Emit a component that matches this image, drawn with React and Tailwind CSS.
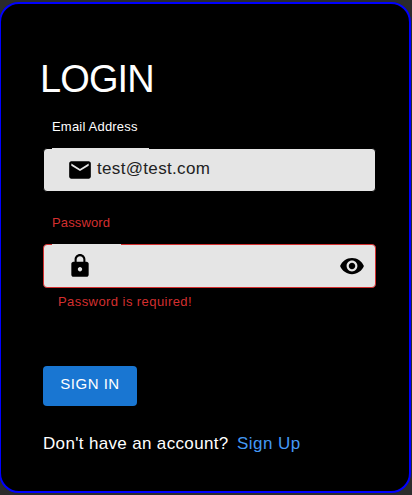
import { MdEmail, MdLock, MdVisibility } from "react-icons/md";

function Notch({ className }) {
  return <span className={`absolute -top-px left-2 h-px bg-[#e5e5e5] ${className}`} />;
}

export default function App() {
  return (
    <div className="h-[495px] w-[412px] overflow-hidden bg-[#2b2b2b] pt-[2px] font-['Liberation_Sans',Arial,sans-serif]">
      <main className="-ml-px flex h-[491px] w-[412px] flex-col rounded-[20px] border-2 border-[#0000ff] bg-black pr-[33px] pl-[42px] text-white">
        <h1 className="-ml-[3px] mt-[52px] h-[46px] text-[38px] leading-[46px] tracking-[-0.9px]">LOGIN</h1>
        <label className="mt-[15px] ml-[9px] h-5 text-[13px] leading-5 tracking-[0.2px]">Email Address</label>
        <div className="relative mt-[11px] flex h-[44px] w-[333px] items-center rounded-[4px] border border-black bg-[#e5e5e5] pl-[23px] text-black">
          <Notch className="w-[97px]" />
          <MdEmail size={26} />
          <span className="ml-[4px] pb-[2px] text-[17px] leading-6 tracking-[0.33px] text-[#222]">test@test.com</span>
        </div>
        <label className="mt-[21px] ml-[9px] h-5 text-[13px] leading-5 tracking-[0.12px] text-[#d32f2f]">Password</label>
        <div className="relative mt-[11px] flex h-[44px] w-[333px] items-center justify-between rounded-[4px] border border-[#d32f2f] bg-[#e5e5e5] pr-[10px] pl-[23px] text-black">
          <Notch className="w-[69px]" />
          <MdLock size={26} />
          <MdVisibility size={26} />
        </div>
        <p className="mt-[4px] ml-[15px] h-5 text-[13px] leading-5 tracking-[0.43px] text-[#d32f2f]">Password is required!</p>
        <button className="mt-[54px] flex h-10 w-[94px] justify-center rounded-[4px] bg-[#1976d2] pt-[6px] text-[15px] leading-6 tracking-[0.5px]">SIGN IN</button>
        <p className="mt-[26px] h-6 whitespace-nowrap text-[17px] leading-6 tracking-[0.34px]">
          Don't have an account?<a className="ml-[8.5px] tracking-[0.45px] text-[#4499f5]">Sign Up</a>
        </p>
      </main>
    </div>
  );
}
